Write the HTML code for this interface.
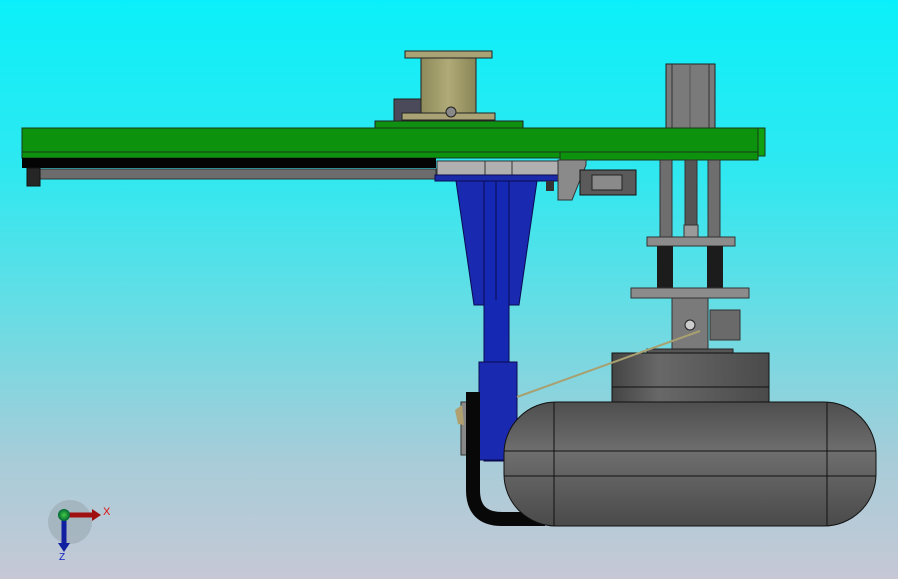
<!DOCTYPE html>
<html><head><style>
html,body{margin:0;padding:0;width:898px;height:579px;overflow:hidden}
body{background:linear-gradient(#0af0fa 0%,#30e8f0 30%,#6adce4 55%,#a8ccd8 80%,#c6c8d6 100%)}
svg{position:absolute;left:0;top:0}
</style></head><body>
<svg width="898" height="579" viewBox="0 0 898 579">
<defs>
<linearGradient id="tank" x1="0" y1="0" x2="0" y2="1"><stop offset="0" stop-color="#4e4e4e"/><stop offset=".4" stop-color="#6e6e6e"/><stop offset="1" stop-color="#4a4a4a"/></linearGradient>
<linearGradient id="drum" x1="0" y1="0" x2="1" y2="0"><stop offset="0" stop-color="#444"/><stop offset=".3" stop-color="#686868"/><stop offset="1" stop-color="#4a4a4a"/></linearGradient>
<linearGradient id="spool" x1="0" y1="0" x2="1" y2="0"><stop offset="0" stop-color="#8e8a5a"/><stop offset=".5" stop-color="#b0aa78"/><stop offset="1" stop-color="#8a8556"/></linearGradient>
<radialGradient id="ball"><stop offset="0" stop-color="#4c4"/><stop offset="1" stop-color="#063"/></radialGradient>
</defs>
<!-- spool -->
<rect x="394" y="99" width="28" height="22" fill="#4a4a5a" stroke="#222"/>
<rect x="405" y="51" width="87" height="7" fill="#a8a274" stroke="#222"/>
<rect x="421" y="58" width="55" height="55" fill="url(#spool)" stroke="#222"/>
<rect x="402" y="113" width="93" height="7" fill="#a8a274" stroke="#222"/>
<circle cx="451" cy="112" r="5" fill="#888" stroke="#222"/>
<rect x="375" y="121" width="148" height="7" fill="#109010" stroke="#222"/>
<!-- right cylinder -->
<rect x="666" y="64" width="49" height="64" fill="#7a7a7a" stroke="#222"/>
<line x1="672" y1="64" x2="672" y2="128" stroke="#333"/><line x1="709" y1="64" x2="709" y2="128" stroke="#333"/>
<line x1="690" y1="64" x2="690" y2="128" stroke="#555"/>
<!-- beam -->
<rect x="22" y="128" width="743" height="24" fill="#0c920c" stroke="#1a3a1a"/>
<rect x="22" y="152" width="540" height="6" fill="#0c920c" stroke="#1a3a1a"/>
<rect x="560" y="152" width="198" height="8" fill="#0c920c" stroke="#1a3a1a"/>
<rect x="758" y="128" width="7" height="28" fill="#10a010" stroke="#1a3a1a"/>
<rect x="22" y="158" width="414" height="10" fill="#040404"/>
<rect x="40" y="169" width="396" height="10" fill="#6c6c6c" stroke="#333"/>
<rect x="27" y="168" width="13" height="18" fill="#262626" stroke="#111"/>
<!-- carriage -->
<rect x="437" y="161" width="121" height="14" fill="#b0b0b0" stroke="#333"/>
<line x1="485" y1="161" x2="485" y2="175" stroke="#333"/><line x1="512" y1="161" x2="512" y2="175" stroke="#333"/>
<rect x="435" y="175" width="125" height="6" fill="#1a2aa8" stroke="#0a0a50"/>
<rect x="546" y="181" width="8" height="10" fill="#333"/>
<!-- blue arm -->
<polygon points="456,181 537,181 519,305 474,305" fill="#1a2ab0" stroke="#0a0a50"/>
<rect x="484" y="181" width="25" height="280" fill="#1428b4" stroke="#0a0a50"/>
<line x1="496" y1="181" x2="496" y2="300" stroke="#0a0a50"/>
<rect x="479" y="362" width="38" height="98" fill="#1a2ab0" stroke="#0a0a50"/>
<!-- bracket & gripper -->
<polygon points="558,160 586,160 586,165 572,200 558,200" fill="#8a8a8a" stroke="#333"/>
<rect x="580" y="170" width="56" height="25" fill="#5a5a5a" stroke="#111"/>
<rect x="592" y="175" width="30" height="15" fill="#8a8a8a" stroke="#222"/>
<!-- rods -->
<rect x="660" y="160" width="12" height="78" fill="#6e6e6e" stroke="#333"/>
<rect x="708" y="160" width="12" height="78" fill="#6e6e6e" stroke="#333"/>
<rect x="685" y="160" width="12" height="65" fill="#555" stroke="#333"/>
<rect x="684" y="225" width="14" height="12" fill="#9a9a9a" stroke="#333"/>
<rect x="647" y="237" width="88" height="9" fill="#8c8c8c" stroke="#333"/>
<g fill="#1c1c1c"><rect x="657" y="246" width="16" height="42"/><rect x="707" y="246" width="16" height="42"/></g>
<rect x="631" y="288" width="118" height="10" fill="#8c8c8c" stroke="#333"/>
<rect x="710" y="310" width="30" height="30" fill="#6a6a6a" stroke="#333"/>
<rect x="672" y="298" width="36" height="52" fill="#7a7a7a" stroke="#333"/>
<circle cx="690" cy="325" r="5" fill="#ccc" stroke="#222"/>
<!-- drum -->
<rect x="647" y="349" width="86" height="5" fill="#555" stroke="#222"/>
<rect x="612" y="353" width="157" height="49" fill="url(#drum)" stroke="#111"/>
<line x1="612" y1="387" x2="769" y2="387" stroke="#111"/>
<!-- hose & plate -->
<rect x="461" y="402" width="15" height="53" fill="#888" stroke="#333"/>
<polygon points="455,410 462,405 464,425 458,424" fill="#b0a070"/>
<path d="M473 392 V490 Q473 519 502 519 H545" fill="none" stroke="#080808" stroke-width="14"/>
<!-- tank -->
<rect x="504" y="402" width="372" height="124" rx="52" fill="url(#tank)" stroke="#111"/>
<line x1="554" y1="402" x2="554" y2="526" stroke="#111"/>
<line x1="827" y1="402" x2="827" y2="526" stroke="#111"/>
<line x1="504" y1="451" x2="876" y2="451" stroke="#111"/>
<line x1="504" y1="476" x2="876" y2="476" stroke="#111"/>
<line x1="517" y1="397" x2="700" y2="331" stroke="#a8a070" stroke-width="2"/>
<!-- triad -->
<circle cx="70" cy="522" r="22" fill="#9aa8b0" opacity=".6"/>
<line x1="64" y1="515" x2="94" y2="515" stroke="#a01010" stroke-width="5"/>
<polygon points="92,509 101,515 92,521" fill="#a01010"/>
<line x1="64" y1="515" x2="64" y2="545" stroke="#1020a0" stroke-width="5"/>
<polygon points="58,543 64,552 70,543" fill="#1020a0"/>
<circle cx="64" cy="515" r="6" fill="url(#ball)"/>
<text x="103" y="515" font-family="Liberation Sans" font-size="11" fill="#e01010">X</text>
<text x="59" y="560" font-family="Liberation Sans" font-size="10" fill="#1020c0">Z</text>
</svg>
</body></html>
